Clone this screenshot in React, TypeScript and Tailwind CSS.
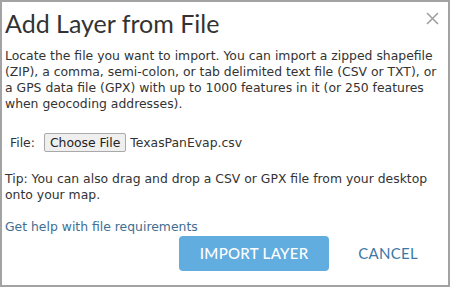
export default function App() {
  return (
    <div className="w-[450px] h-[287px] bg-white">
      <div className="relative h-full border-2 border-[#a3a3a3] bg-white text-[#333]">
        {/* close */}
        <button className="absolute right-[9px] top-[10px] text-[#a0a0a0]">
          <svg width="13" height="13" viewBox="0 0 13 13">
            <path d="M1 1 L12 12 M12 1 L1 12" stroke="currentColor" strokeWidth="1.6" />
          </svg>
        </button>

        <h1 className="pl-[3px] pt-[6px] text-[25px] leading-[30px] text-[#333] font-['Lato',sans-serif]">
          Add Layer from File
        </h1>

        <div className="px-[3px] font-['DejaVu_Sans',Verdana,sans-serif] text-[12.4px] leading-[16px]">
          <p className="mt-[10px] max-w-[437px]">
            Locate the file you want to import. You can import a zipped shapefile (ZIP), a comma,
            semi-colon, or tab delimited text file (CSV or TXT), or a GPS data file (GPX) with up to
            1000 features in it (or 250 features when geocoding addresses).
          </p>

          <div className="mt-[21px] flex items-center pl-[5px]">
            <span>File:</span>
            <button className="ml-[9px] h-[19px] px-[5px] border border-[#a9a9a9] bg-[#efefef] rounded-[2px] text-[12.4px] leading-[16px] text-[#222]">
              Choose File
            </button>
            <span className="ml-[4px]">TexasPanEvap.csv</span>
          </div>

          <p className="mt-[19px]">
            Tip: You can also drag and drop a CSV or GPX file from your desktop onto your map.
          </p>

          <a className="mt-[16px] block text-[#3e6e92]">Get help with file requirements</a>
        </div>

        <div className="mt-[1px] flex items-center justify-end pr-[30px] font-['Lato',sans-serif] text-[15px]">
          <button className="h-[35px] w-[150px] rounded-[4px] bg-[#61addf] text-white font-medium tracking-[0.3px]">
            IMPORT LAYER
          </button>
          <button className="ml-[29px] text-[#3c78a6] tracking-[0.3px]">CANCEL</button>
        </div>
      </div>
    </div>
  );
}
